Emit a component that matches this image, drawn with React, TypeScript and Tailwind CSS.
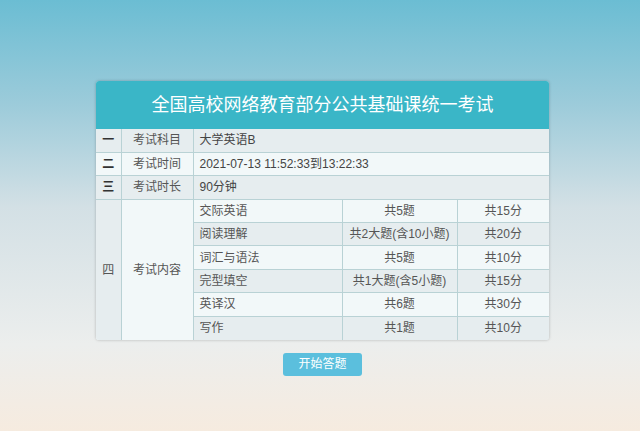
const font = '[font-family:"Liberation_Sans","Noto_Sans_CJK_SC",sans-serif]';

// Exam info rows
const infoRows = [
  { no: '一', label: '考试科目', value: '大学英语B', light: false },
  { no: '二', label: '考试时间', value: '2021-07-13 11:52:33到13:22:33', light: true },
  { no: '三', label: '考试时长', value: '90分钟', light: false },
];

const sections = [
  { name: '交际英语', count: '共5题', score: '共15分' },
  { name: '阅读理解', count: '共2大题(含10小题)', score: '共20分' },
  { name: '词汇与语法', count: '共5题', score: '共10分' },
  { name: '完型填空', count: '共1大题(含5小题)', score: '共15分' },
  { name: '英译汉', count: '共6题', score: '共30分' },
  { name: '写作', count: '共1题', score: '共10分' },
];

const cell = 'border border-[#b9d2d5] h-[23.4px] p-0 text-[12px] text-[#555]';

export default function App() {
  return (
    <div
      className={`${font} w-[640px] h-[431px] pl-[5px] flex flex-col items-center bg-[linear-gradient(to_bottom,#6bbdd3_0%,#9ccbda_24%,#d3e0e5_48%,#eceeed_80%,#f6ebdf_100%)]`}
    >
      <div className="mt-[81px] w-[453px] rounded-[3px] overflow-hidden shadow-[0_0_3px_rgba(0,0,0,0.25)] bg-[#e8eef0]">
        <div className="h-[48px] bg-[#3ab6c7] flex items-center justify-center text-white text-[18px]">
          全国高校网络教育部分公共基础课统一考试
        </div>
        <table className="w-full border-collapse table-fixed border-hidden">
          <colgroup>
            <col className="w-[25px]" />
            <col className="w-[72px]" />
            <col className="w-[149px]" />
            <col className="w-[115px]" />
            <col className="w-[92px]" />
          </colgroup>
          <tbody>
            {infoRows.map((r) => (
              <tr key={r.no} className={r.light ? 'bg-[#f2f8f9]' : 'bg-[#e6edef]'}>
                <td className={`${cell} text-center font-bold !text-[#333]`}>{r.no}</td>
                <td className={`${cell} text-center`}>{r.label}</td>
                <td className={`${cell} pl-[6px] !text-[#444]`} colSpan={3}>
                  {r.value}
                </td>
              </tr>
            ))}
            {sections.map((s, i) => (
              <tr key={s.name} className={i % 2 === 0 ? 'bg-[#f2f8f9]' : 'bg-[#e6edef]'}>
                {i === 0 && (
                  <>
                    <td className={`${cell} text-center bg-[#e6edef]`} rowSpan={6}>四</td>
                    <td className={`${cell} text-center bg-[#f2f8f9]`} rowSpan={6}>考试内容</td>
                  </>
                )}
                <td className={`${cell} pl-[6px]`}>{s.name}</td>
                <td className={`${cell} text-center`}>{s.count}</td>
                <td className={`${cell} text-center`}>{s.score}</td>
              </tr>
            ))}
          </tbody>
        </table>
      </div>
      <button className="mt-[13px] w-[79px] h-[23px] rounded-[3px] bg-[#5bbfdd] text-white text-[12px]">
        开始答题
      </button>
    </div>
  );
}
